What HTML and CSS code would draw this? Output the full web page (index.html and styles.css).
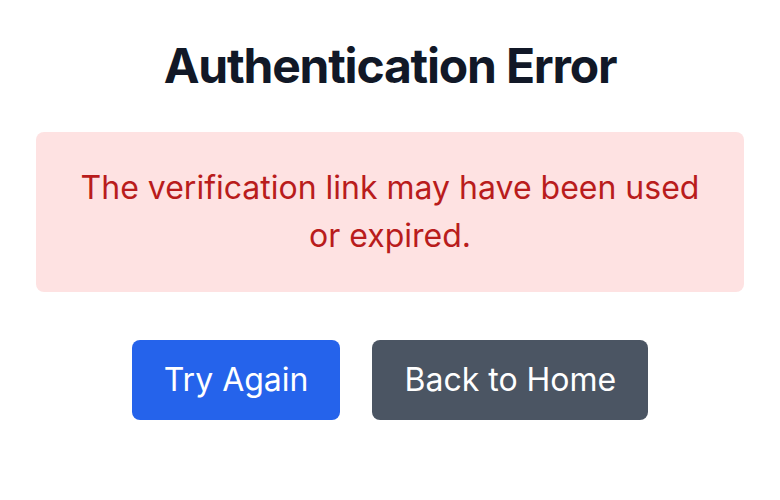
FILE: index.html
```html
<!DOCTYPE html>
<html>
<head>
<meta charset="utf-8">
<link rel="stylesheet" href="styles.css">
</head>
<body>
<main class="page">
  <h1 class="title">Authentication Error</h1>
  <div class="alert">The verification link may have been used or expired.</div>
  <div class="actions">
    <a class="btn btn-primary" href="#">Try Again</a>
    <a class="btn btn-secondary" href="#">Back to Home</a>
  </div>
</main>
</body>
</html>
```
FILE: styles.css
```css
* { box-sizing: border-box; }
html, body { margin: 0; padding: 0; background: #ffffff; }
body { font-family: Inter, "Noto Sans", sans-serif; }
.page {
  padding: 34px 36px;
  display: flex;
  flex-direction: column;
  align-items: stretch;
}
.title {
  margin: 0 0 34px;
  text-align: center;
  font-size: 48px;
  line-height: 64px;
  font-weight: 700;
  color: #111827;
  letter-spacing: -0.025em;
}
.alert {
  background: #fee2e2;
  color: #b91c1c;
  border-radius: 8px;
  padding: 32px;
  text-align: center;
  font-size: 32px;
  line-height: 48px;
}
.actions {
  margin-top: 48px;
  display: flex;
  justify-content: center;
  gap: 32px;
}
.btn {
  display: inline-block;
  text-decoration: none;
  color: #ffffff;
  font-size: 32px;
  line-height: 48px;
  padding: 16px 32px;
  border-radius: 8px;
}
.btn-primary { background: #2563eb; }
.btn-secondary { background: #4b5563; }
```
